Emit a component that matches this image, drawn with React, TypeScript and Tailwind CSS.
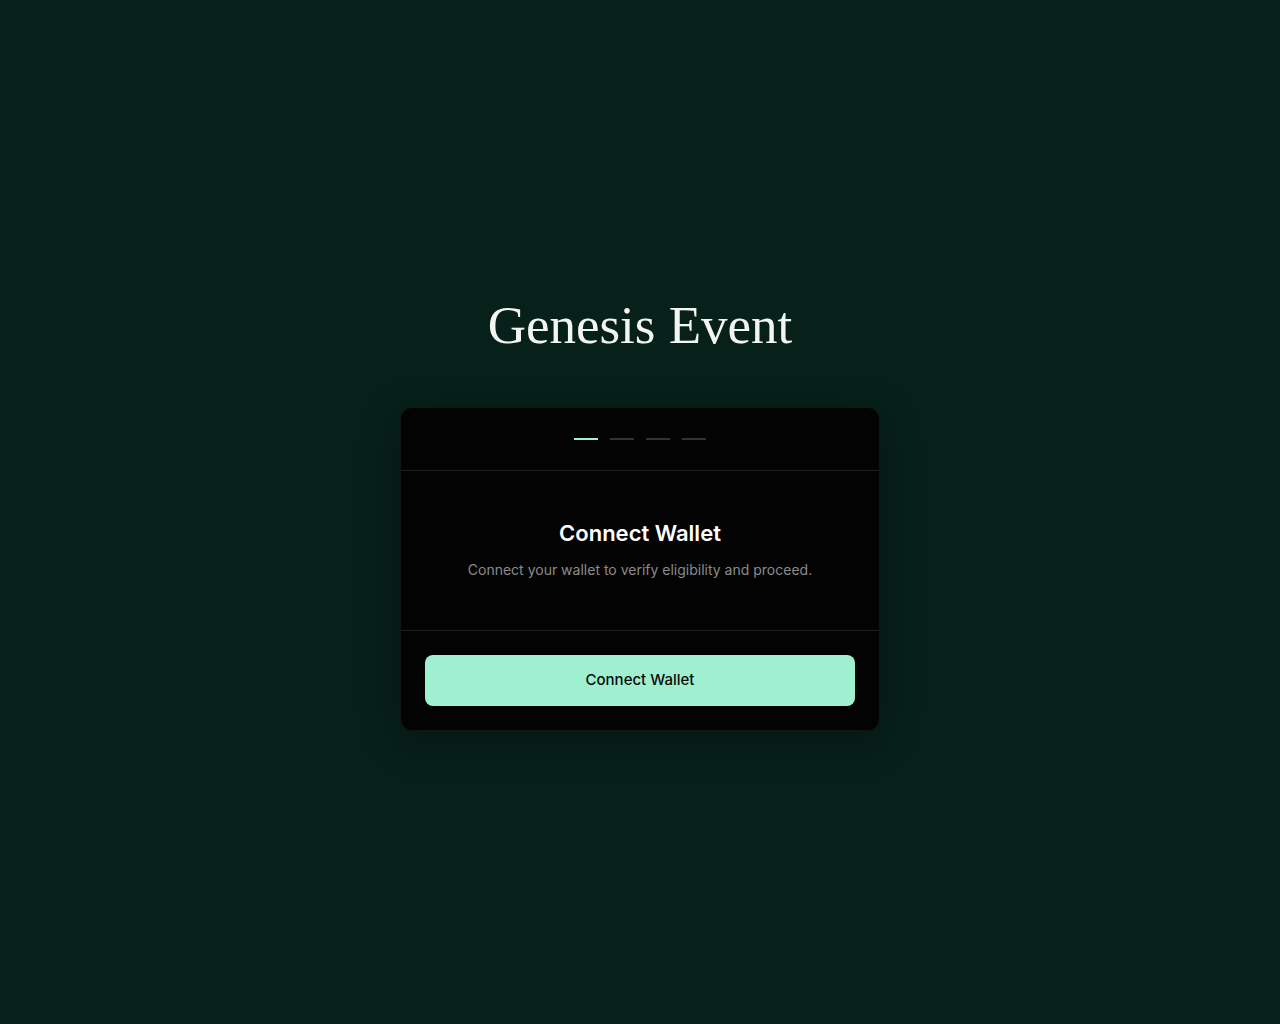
const steps = [true, false, false, false];

export default function App() {
  return (
    <div className="min-h-screen w-full bg-[#07201a] flex flex-col items-center justify-center font-['Inter','Liberation_Sans',sans-serif]">
      <h1 className="font-['Liberation_Serif',serif] text-[53px] leading-[64px] text-[#f3f6f0] mb-[50px]">
        Genesis Event
      </h1>

      <div className="w-[480px] rounded-xl bg-[#030303] border border-[#141414] shadow-[0_10px_40px_rgba(0,0,0,0.3)] overflow-hidden">
        {/* step indicator */}
        <div className="flex justify-center gap-3 py-[30px] border-b border-[#1e1e1e]">
          {steps.map((active, i) => (
            <span
              key={i}
              className={
                active
                  ? "block w-6 h-[2px] bg-[#9ef0d0]"
                  : "block w-6 h-[2px] bg-[#333333]"
              }
            />
          ))}
        </div>

        <div className="flex flex-col items-center pt-[48px] pb-[50px] border-b border-[#1e1e1e]">
          <h2 className="text-[22px] leading-[28px] font-semibold text-white">
            Connect Wallet
          </h2>
          <p className="mt-[13px] text-sm leading-5 text-[#8b8b8b]">
            Connect your wallet to verify eligibility and proceed.
          </p>
        </div>

        <div className="p-6">
          <button className="w-full h-[51px] rounded-lg bg-[#9ef0d0] text-[15px] font-medium text-[#0a0a0a]">
            Connect Wallet
          </button>
        </div>
      </div>
    </div>
  );
}
